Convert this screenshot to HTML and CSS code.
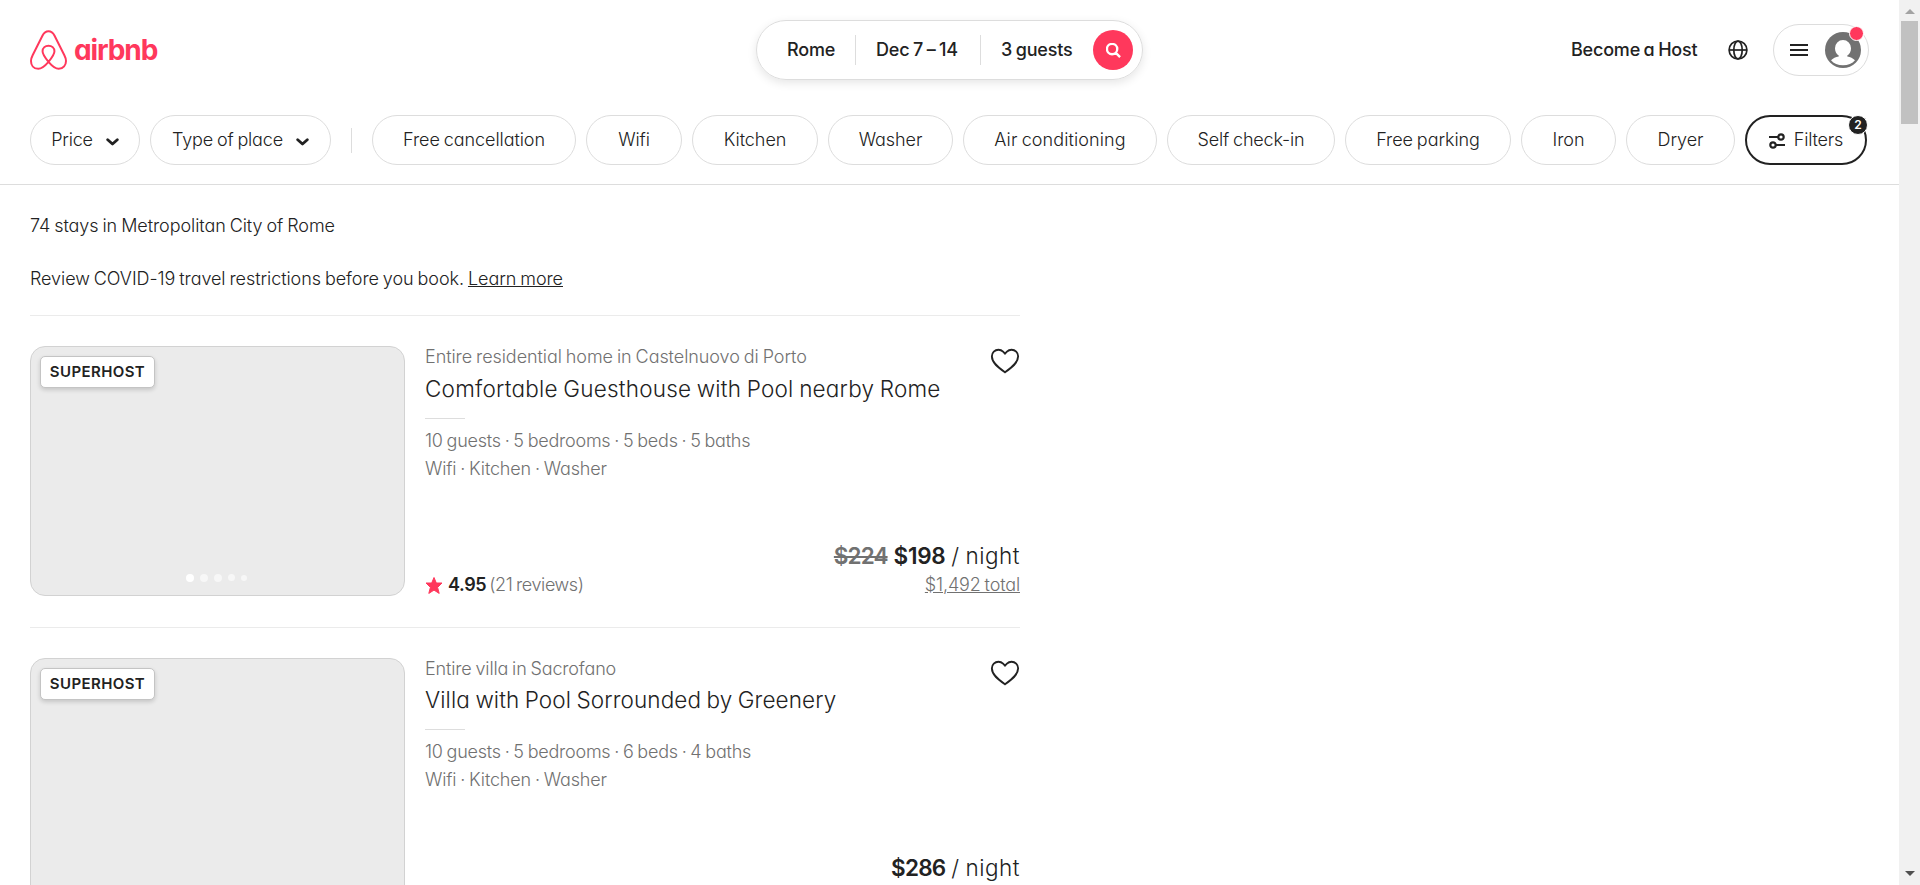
FILE: index.html
```html
<!DOCTYPE html>
<html lang="en">
<head>
<meta charset="utf-8">
<title>Stays in Rome</title>
<link rel="stylesheet" href="styles.css">
</head>
<body>
<div class="app">
  <div class="page">
    <header class="header">
      <a class="logo">
        <svg class="logo-mark" viewBox="0 0 112 120"><path d="M56 96C45 109 36 117 25 117C10 117 3 105 3 93C3 88 5 82 8 76L38 16C43 6 48 3 56 3C64 3 69 6 74 16L104 76C107 82 109 88 109 93C109 105 101 117 87 117C76 117 67 109 56 96C46 84 38 74 38 64C38 53 46 47 56 47C66 47 74 53 74 64C74 74 66 84 56 96Z"/></svg>
        <span class="wordmark">airbnb</span>
      </a>
      <div class="search">
        <span class="search-item place">Rome</span>
        <span class="search-item dates">Dec 7 – 14</span>
        <span class="search-item guests">3 guests</span>
        <span class="search-button"><svg viewBox="0 0 32 32"><path d="M13 24a11 11 0 1 0 0-22 11 11 0 0 0 0 22zm8-3 9 9"/></svg></span>
      </div>
      <nav class="user-nav">
        <a class="host">Become a Host</a>
        <svg class="globe" viewBox="0 0 20 20"><circle cx="10" cy="10" r="8.9"/><ellipse cx="10" cy="10" rx="4.2" ry="8.9"/><path d="M1 10h18"/></svg>
        <div class="menu">
          <svg class="burger" viewBox="0 0 18 12"><path d="M0 1h18M0 6h18M0 11h18"/></svg>
          <span class="avatar"><svg viewBox="0 0 36 36"><circle cx="18" cy="18" r="18" fill="#717171"/><path fill="#fff" d="M18 8a8 8 0 0 1 8 8.200c0 3-1.300 5.800-3.700 7.200v1c3 .500 5.700 1.800 7.700 3.800C27.300 31.500 23 33.200 18 33.200S8.700 31.500 6 28.200c2-2 4.700-3.300 7.700-3.800v-1c-2.400-1.400-3.700-4.200-3.700-7.200A8 8 0 0 1 18 8z"/></svg><i class="dot"></i></span>
        </div>
      </nav>
    </header>
    <div class="filters">
      <span class="chip price-chip">Price<svg class="chevron" viewBox="0 0 13 8"><path d="m1.700 1.700 4.800 4.300 4.800-4.300"/></svg></span>
      <span class="chip type-chip">Type of place<svg class="chevron" viewBox="0 0 13 8"><path d="m1.700 1.700 4.800 4.300 4.800-4.300"/></svg></span>
      <i class="divider"></i>
      <span class="chip cancellation">Free cancellation</span>
      <span class="chip wifi">Wifi</span>
      <span class="chip kitchen">Kitchen</span>
      <span class="chip washer">Washer</span>
      <span class="chip air">Air conditioning</span>
      <span class="chip checkin">Self check-in</span>
      <span class="chip parking">Free parking</span>
      <span class="chip iron">Iron</span>
      <span class="chip dryer">Dryer</span>
      <span class="chip active"><svg class="sliders" viewBox="0 0 16 16"><path d="M0 4h9M7 12h9"/><circle cx="12" cy="4" r="2.700"/><circle cx="4" cy="12" r="2.700"/></svg>Filters<b class="count">2</b></span>
    </div>
    <main class="results">
      <p class="stays">74 stays in Metropolitan City of Rome</p>
      <p class="notice"><span>Review COVID-19 travel restrictions before you book.</span> <a class="learn">Learn more</a></p>
      <article class="card">
        <div class="photo"><span class="badge">SUPERHOST</span><div class="dots"><i></i><i></i><i></i><i></i><i></i></div></div>
        <div class="info">
          <div class="kind">Entire residential home in Castelnuovo di Porto</div>
          <h2 class="title">Comfortable Guesthouse with Pool nearby Rome</h2>
          <i class="rule"></i>
          <div class="meta">10 guests · 5 bedrooms · 5 beds · 5 baths</div>
          <div class="meta amenities">Wifi · Kitchen · Washer</div>
          <div class="bottom">
            <div class="rating"><svg class="star" viewBox="0 0 18 17"><path d="M9 .5l2.300 5.500h5.700l-4.400 4.400 1.600 6-5.200-3.300-5.200 3.300 1.600-6L1 6h5.700z"/></svg><b>4.95</b><span class="reviews">(21 reviews)</span></div>
            <div class="cost"><div class="price"><s>$224</s><b>$198</b><span class="night">/ night</span></div><div class="total">$1,492 total</div></div>
          </div>
          <svg class="heart" viewBox="0 0 32 32"><path d="m16 28c7-4.733 14-10 14-17 0-1.792-.683-3.583-2.050-4.950-1.367-1.366-3.158-2.050-4.950-2.050-1.791 0-3.583.684-4.949 2.050l-2.051 2.051-2.050-2.051c-1.367-1.366-3.158-2.050-4.950-2.050-1.791 0-3.583.684-4.949 2.050-1.367 1.367-2.051 3.158-2.051 4.950 0 7 7 12.267 14 17z"/></svg>
        </div>
      </article>
      <article class="card villa">
        <div class="photo"><span class="badge">SUPERHOST</span><div class="dots"><i></i><i></i><i></i><i></i><i></i></div></div>
        <div class="info">
          <div class="kind">Entire villa in Sacrofano</div>
          <h2 class="title">Villa with Pool Sorrounded by Greenery</h2>
          <i class="rule"></i>
          <div class="meta">10 guests · 5 bedrooms · 6 beds · 4 baths</div>
          <div class="meta amenities">Wifi · Kitchen · Washer</div>
          <div class="bottom">
            <div></div>
            <div class="cost"><div class="price"><b>$286</b><span class="night">/ night</span></div></div>
          </div>
          <svg class="heart" viewBox="0 0 32 32"><path d="m16 28c7-4.733 14-10 14-17 0-1.792-.683-3.583-2.050-4.950-1.367-1.366-3.158-2.050-4.950-2.050-1.791 0-3.583.684-4.949 2.050l-2.051 2.051-2.050-2.051c-1.367-1.366-3.158-2.050-4.950-2.050-1.791 0-3.583.684-4.949 2.050-1.367 1.367-2.051 3.158-2.051 4.950 0 7 7 12.267 14 17z"/></svg>
        </div>
      </article>
    </main>
  </div>
  <aside class="scrollbar"><i class="up"></i><i class="thumb"></i><i class="down"></i></aside>
</div>
</body>
</html>
```
FILE: styles.css
```css
* { box-sizing: border-box; }
body {
  margin: 0;
  height: 885px;
  overflow: hidden;
  background: #fff;
  color: #222;
  font: 300 18px/28px Inter, "Liberation Sans", sans-serif;
  font-feature-settings: "cv11";
  letter-spacing: -0.07px;
  word-spacing: -1px;
  white-space: nowrap;
}
svg { display: block; fill: none; stroke: currentColor; flex: none; }
i { font-style: normal; }
p, h2 { margin: 0; }
.app { display: flex; height: 885px; }
.page { width: 1899px; height: 885px; overflow: hidden; }

.header { display: flex; height: 100px; padding: 20px 30px 0; align-items: flex-start; }
.logo { display: flex; width: 726px; padding-top: 10px; color: #ff385c; }
.logo-mark { width: 37px; height: 40px; stroke-width: 6; }
.wordmark {
  margin-left: 7px;
  font-size: 28px;
  line-height: 40px;
  font-weight: 700;
  letter-spacing: -1.1px;
}
.search {
  display: flex;
  align-items: center;
  width: 387px;
  height: 60px;
  border: 1px solid #ddd;
  border-radius: 30px;
  box-shadow: 0 3px 10px rgba(0, 0, 0, .1);
  font-weight: 500;
  letter-spacing: -0.2px;
}
.search-item { height: 30px; padding-left: 20px; border-right: 1px solid #ddd; line-height: 30px; }
.place { width: 99px; padding-left: 30px; }
.dates { width: 125px; }
.guests { width: 112px; border: 0; }
.search-button { display: flex; align-items: center; justify-content: center; width: 40px; height: 40px; border-radius: 50%; background: #ff385c; color: #fff; }
.search-button svg { width: 15px; height: 15px; stroke-width: 5; }
.user-nav { display: flex; align-items: center; height: 60px; margin-left: auto; font-weight: 500; }
.host { width: 127px; letter-spacing: -0.2px; }
.globe { width: 20px; height: 20px; margin: 0 25px 0 30px; stroke-width: 1.7; }
.menu { display: flex; align-items: center; width: 96px; height: 52px; padding-left: 16px; border: 1px solid #ddd; border-radius: 26px; }
.burger { width: 18px; height: 12px; stroke-width: 2; }
.avatar { position: relative; width: 36px; height: 36px; margin-left: 17px; }
.avatar svg { stroke: none; }
.dot { position: absolute; left: 24px; top: -6px; width: 15px; height: 15px; border: 1px solid #fff; border-radius: 50%; background: #ff385c; }

.filters { display: flex; gap: 10px; height: 85px; padding: 15px 30px 0; border-bottom: 1px solid #ddd; }
.chip { display: flex; align-items: center; justify-content: center; height: 50px; padding-bottom: 1px; border: 1px solid #ddd; border-radius: 25px; flex: none; }
.chevron { width: 13px; height: 8px; margin: 4px 0 0 13px; stroke-width: 2.800; stroke-linecap: round; stroke-linejoin: round; }
.price-chip { width: 110px; letter-spacing: -0.2px; }
.type-chip { width: 181px; letter-spacing: -0.15px; }
.divider { width: 1px; height: 25px; margin: 13px 10px 0; background: #ddd; }
.cancellation { width: 204px; }
.wifi { width: 96px; }
.kitchen { width: 126px; }
.washer { width: 125px; }
.air { width: 194px; letter-spacing: 0.1px; }
.checkin { width: 168px; letter-spacing: -0.15px; }
.parking { width: 166px; }
.iron { width: 95px; }
.dryer { width: 109px; }
.active { position: relative; width: 122px; border: 2px solid #222; letter-spacing: -0.2px; }
.sliders { width: 16px; height: 16px; margin: 3px 9px 0 0; stroke-width: 2.200; }
.count { position: absolute; right: -3px; top: -2px; width: 20px; height: 20px; border: 1px solid #fff; border-radius: 50%; background: #222; color: #fff; font-size: 12px; line-height: 18px; font-weight: 600; text-align: center; }

.results { width: 1020px; padding: 27px 0 0 30px; }
.notice { padding: 25px 0 22px; }
.learn { text-decoration: underline; }
.card { display: flex; height: 312px; padding-top: 30px; border-top: 1px solid #ebebeb; }
.photo { position: relative; width: 375px; height: 250px; border: 1px solid #d2d2d2; border-radius: 15px; background: #ebebeb; }
.badge { position: absolute; left: 9px; top: 9px; width: 115px; height: 32px; border: 1px solid #c4c4c4; border-radius: 5px; background: #fff; box-shadow: 0 2px 4px rgba(0, 0, 0, .16); font-size: 15px; line-height: 30px; font-weight: 600; letter-spacing: .4px; text-align: center; }
.dots { position: absolute; left: 155px; top: 226px; display: flex; align-items: center; gap: 6px; height: 9px; }
.dots i { width: 8px; height: 8px; border-radius: 50%; background: #fff; opacity: .6; }
.dots i:first-child { opacity: 1; }
.dots i:nth-child(4) { width: 7px; height: 7px; }
.dots i:nth-child(5) { width: 6px; height: 6px; }
.info { position: relative; display: flex; flex-direction: column; width: 615px; height: 250px; padding-left: 20px; }
.kind { margin-top: -3px; color: #717171; }
.villa .kind { letter-spacing: -0.15px; }
.title { margin-top: 2px; font-size: 22.5px; line-height: 32px; font-weight: 300; letter-spacing: 0.22px; }
.villa .title { margin-top: 1px; letter-spacing: 0.1px; }
.rule { width: 40px; height: 1px; margin: 13px 0 8px; background: #ddd; }
.meta { color: #717171; letter-spacing: -0.23px; }
.amenities { letter-spacing: -0.16px; }
.heart { position: absolute; right: 0; top: 0; width: 30px; height: 30px; stroke-width: 2; }
.bottom { display: flex; justify-content: space-between; align-items: flex-end; margin-top: auto; height: 62px; }
.rating { display: flex; align-items: center; height: 28px; margin-bottom: -3px; letter-spacing: -0.4px; }
.rating b { margin-left: 5px; font-weight: 600; }
.star { width: 18px; height: 17px; fill: #ff385c; stroke: #ff385c; stroke-linejoin: round; }
.reviews { margin-left: 3px; color: #717171; }
.cost { height: 57px; text-align: right; }
.price { display: flex; justify-content: flex-end; gap: 6px; font-size: 22.5px; line-height: 34px; }
.price b, .price s { font-weight: 600; letter-spacing: -0.3px; }
.price s { color: #717171; letter-spacing: -0.9px; }
.villa .price b { letter-spacing: -0.8px; }
.night { letter-spacing: 0.5px; }
.total { color: #717171; text-decoration: underline; line-height: 24px; letter-spacing: -0.15px; }

.scrollbar { position: relative; width: 21px; height: 885px; padding: 21px 2px 0; background: #f1f1f1; }
.thumb { display: block; width: 17px; height: 103px; background: #c1c1c1; }
.up, .down { position: absolute; left: 6px; border: 5px solid transparent; border-top: 0; }
.up { top: 9px; border-bottom: 5px solid #a3a3a3; }
.down { bottom: 9px; border-bottom: 0; border-top: 5px solid #505050; }
```
